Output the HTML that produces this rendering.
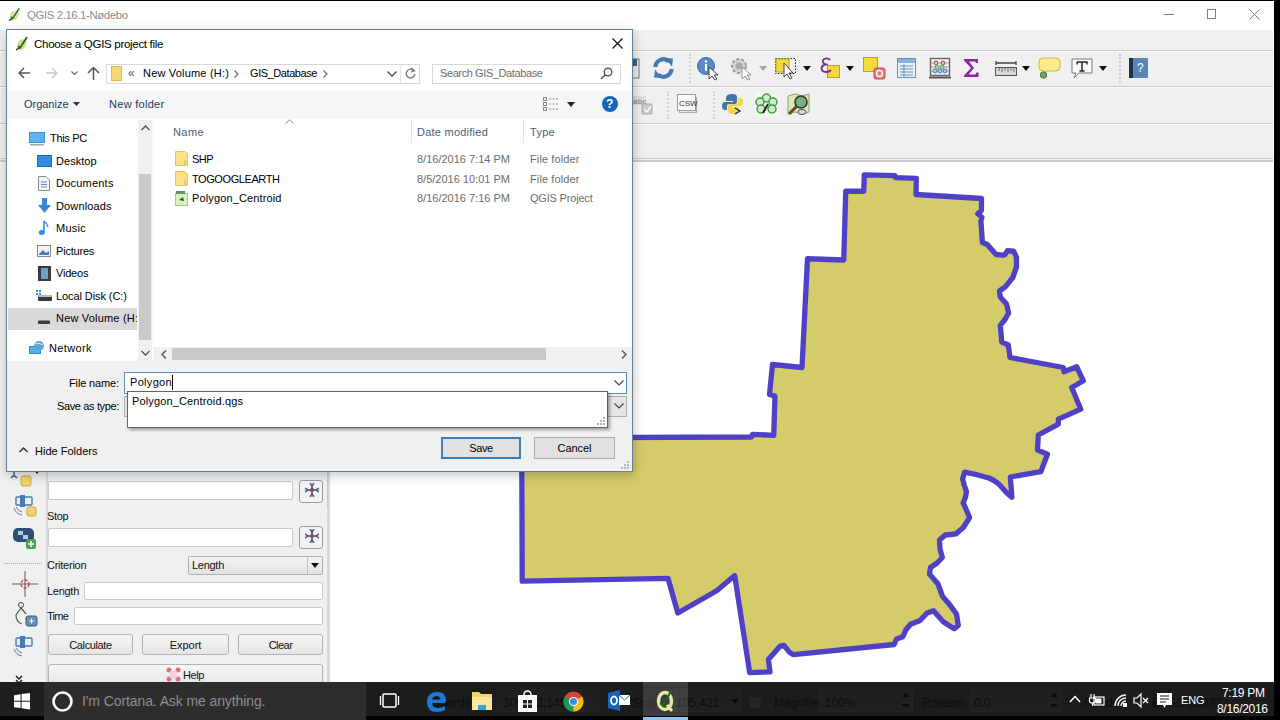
<!DOCTYPE html>
<html><head><meta charset="utf-8">
<style>
*{margin:0;padding:0;box-sizing:border-box}
html,body{width:1280px;height:720px;overflow:hidden;background:#000;font-family:"Liberation Sans",sans-serif;position:relative}
.a{position:absolute}
.t{position:absolute;white-space:nowrap;line-height:1}
svg{position:absolute;overflow:visible}
</style></head><body>
<!-- QGIS window -->
<div class="a" style="left:0;top:1px;width:1274px;height:715px;background:#f0f0f0"></div>
<div class="a" style="left:0;top:1px;width:1274px;height:29px;background:#fff"></div>
<svg style="left:8px;top:7px" width="13" height="15" viewBox="0 0 14 15"><path d="M3 6 Q1 11 4 14 Q9 14 11 9 Q12 5 10 3 Q5 3 3 6Z" fill="#d3e6a0"/><path d="M12 1 L5 12 L3 10" stroke="#2e6a2e" stroke-width="1.6" fill="none"/><path d="M1 14 L4 12" stroke="#222" stroke-width="1.2"/></svg>
<div class="t" style="left:27px;top:10px;font-size:11.4px;letter-spacing:-0.39px;color:#8c8c8c">QGIS 2.16.1-Nødebo</div>
<div class="a" style="left:0;top:50px;width:1274px;height:1px;background:#cbcbcb"></div>
<div class="a" style="left:0;top:51px;width:1274px;height:1px;background:#fafafa"></div>
<div class="a" style="left:0;top:86px;width:1274px;height:1px;background:#cbcbcb"></div>
<div class="a" style="left:0;top:87px;width:1274px;height:1px;background:#fafafa"></div>
<div class="a" style="left:0;top:123px;width:1274px;height:1px;background:#cbcbcb"></div>
<div class="a" style="left:0;top:124px;width:1274px;height:1px;background:#fafafa"></div>
<div class="a" style="left:0;top:158px;width:1274px;height:1px;background:#cbcbcb"></div>
<div class="a" style="left:0;top:160px;width:1274px;height:2px;background:#c8c8c8"></div>
<!-- title buttons -->
<div class="a" style="left:1164px;top:14px;width:10px;height:1px;background:#7c7c7c"></div>
<div class="a" style="left:1207px;top:9px;width:9px;height:10px;border:1px solid #7c7c7c"></div>
<svg style="left:1249px;top:8.5px" width="11" height="11"><path d="M0.5 0.5 L10.5 10.5 M10.5 0.5 L0.5 10.5" stroke="#7c7c7c" stroke-width="1"/></svg>
<!-- toolbar row 2 -->
<svg style="left:632px;top:58px" width="8" height="22"><rect x="-6" y="1" width="13" height="19" fill="#eee" stroke="#777"/><path d="M-2 1 H5 V8 H-2Z" fill="#3d5f8a"/></svg>
<svg style="left:653px;top:57px" width="21" height="22" viewBox="0 0 21 22"><path d="M2.5 10 A8 8 0 0 1 16 4.5" stroke="#4677b5" stroke-width="4.2" fill="none"/><path d="M12 1 L20 1.5 L19 9.5Z" fill="#4677b5"/><path d="M18.5 12 A8 8 0 0 1 5 17.5" stroke="#4677b5" stroke-width="4.2" fill="none"/><path d="M9 21 L1 20.5 L2 12.5Z" fill="#4677b5"/></svg>
<div class="a" style="left:689px;top:54px;width:2px;height:29px;border-left:2px dotted #d0d0d0"></div>
<svg style="left:697px;top:57px" width="24" height="23"><circle cx="9" cy="9" r="8.5" fill="#5a8ac6" stroke="#3b6aa8"/><path d="M9 7 V14" stroke="#fff" stroke-width="2.2"/><circle cx="9" cy="4.5" r="1.3" fill="#fff"/><path d="M12 10 L12 22 L15 19 L18 23 L20 22 L17 18 L21 18Z" fill="#fff" stroke="#333" stroke-width="0.9"/></svg>
<svg style="left:730px;top:57px" width="23" height="23"><circle cx="9" cy="9" r="7" fill="#d4d4d4" stroke="#999" stroke-width="2" stroke-dasharray="3,2"/><circle cx="9" cy="9" r="3.5" fill="#aaa"/><path d="M12 10 L12 22 L15 19 L18 23 L20 22 L17 18 L21 18Z" fill="#fff" stroke="#888" stroke-width="0.9"/></svg>
<svg style="left:759px;top:66px" width="8" height="5"><path d="M0 0 H8 L4 5Z" fill="#a8a8a8"/></svg>
<svg style="left:775px;top:58px" width="23" height="23"><rect x="0.5" y="0.5" width="20" height="15" fill="none" stroke="#222" stroke-dasharray="1.5,1.5"/><rect x="1" y="1" width="13" height="13" fill="#f3dc3a" stroke="#b9a020"/><path d="M9 5 L9 19 L12 16 L15 21 L17 20 L14 15 L18 15Z" fill="#fff" stroke="#333" stroke-width="0.9"/></svg>
<svg style="left:803px;top:66px" width="8" height="5"><path d="M0 0 H8 L4 5Z" fill="#111"/></svg>
<svg style="left:820px;top:57px" width="21" height="23"><rect x="7.5" y="8.5" width="12" height="12" fill="#f3dc3a" stroke="#b9a020"/><path d="M10 3 Q8 1 5.5 1.5 Q2 2.5 3 5.5 Q4 7 6 7.5 Q2 8 1.5 11 Q1.5 15 6 15 Q9 15 11 13" stroke="#7a2a8a" stroke-width="1.8" fill="none"/><path d="M6 7.5 H8" stroke="#7a2a8a" stroke-width="1.5"/></svg>
<svg style="left:846px;top:66px" width="8" height="5"><path d="M0 0 H8 L4 5Z" fill="#111"/></svg>
<svg style="left:863px;top:57px" width="24" height="24"><rect x="0.5" y="0.5" width="14" height="14" fill="#f3dc3a" stroke="#b9a020"/><rect x="11" y="11" width="11" height="11" rx="2" fill="#e87a7a" stroke="#c84a4a"/><circle cx="16.5" cy="16.5" r="3" stroke="#fff" stroke-width="1.3" fill="none"/></svg>
<svg style="left:897px;top:58px" width="20" height="21"><rect x="0.5" y="0.5" width="18" height="19" fill="#e8f0fa" stroke="#6a8fc0"/><rect x="1" y="1" width="17" height="4" fill="#8cb0dc"/><path d="M3 8 H16 M3 11 H16 M3 14 H16 M3 17 H16 M7 6 V19" stroke="#6a8fc0" stroke-width="1"/></svg>
<svg style="left:929px;top:57px" width="22" height="22"><rect x="1.5" y="1.5" width="19" height="17" fill="none" stroke="#666" stroke-width="1.4"/><path d="M0 20.5 H22" stroke="#555" stroke-width="2"/><path d="M2 6 H20 M2 10 H20 M2 14 H20" stroke="#888" stroke-width="0.8"/><g fill="none" stroke-width="1.2"><circle cx="7" cy="6" r="1.8" stroke="#d25a5a"/><circle cx="14" cy="6" r="1.8" stroke="#d25a5a"/><circle cx="8" cy="10" r="1.8" stroke="#6ab06a"/><circle cx="13" cy="10" r="1.8" stroke="#6ab06a"/><circle cx="6" cy="14" r="1.8" stroke="#5a8ad2"/><circle cx="11" cy="14" r="1.8" stroke="#5a8ad2"/><circle cx="16" cy="14" r="1.8" stroke="#5a8ad2"/></g></svg>
<svg style="left:963px;top:58px" width="17" height="20"><path d="M1 1 H15 V5 H13 L12 3.5 H6 L11 10 L5.5 16.5 H12.5 L13.5 14.5 H15.5 V19 H1 V17.5 L8 10 L1 2.5Z" fill="#8a2a9a"/></svg>
<svg style="left:995px;top:61px" width="22" height="15"><path d="M1 2 H21 M1 0 V4 M21 0 V4" stroke="#444" stroke-width="1.3"/><rect x="0.5" y="6.5" width="21" height="8" fill="#d8d8d8" stroke="#555"/><path d="M4 7 V10 M7 7 V11 M10 7 V10 M13 7 V11 M16 7 V10 M19 7 V11" stroke="#555" stroke-width="0.8"/></svg>
<svg style="left:1022px;top:66px" width="8" height="5"><path d="M0 0 H8 L4 5Z" fill="#111"/></svg>
<svg style="left:1038px;top:57px" width="23" height="22"><path d="M5 1 H18 Q22 1 22 5 V10 Q22 14 18 14 H9 L6 17 L7 14 H5 Q1 14 1 10 V5 Q1 1 5 1Z" fill="#fbee8a" stroke="#c9b840"/><circle cx="5.5" cy="18" r="3.2" fill="#7aa06a" stroke="#4a7a3a"/></svg>
<svg style="left:1071px;top:58px" width="22" height="22"><path d="M1 1 H21 V15 H8 L3 20 L5 15 H1Z" fill="#fafafa" stroke="#777"/><path d="M6 4 H16 V6.5 M11 4 V13 M8.5 13 H13.5 M6 4 V6.5" stroke="#222" stroke-width="1.4" fill="none"/></svg>
<svg style="left:1099px;top:66px" width="8" height="5"><path d="M0 0 H8 L4 5Z" fill="#111"/></svg>
<div class="a" style="left:1119px;top:54px;width:2px;height:29px;border-left:2px dotted #d0d0d0"></div>
<svg style="left:1129px;top:58px" width="20" height="20"><rect x="0" y="0" width="19" height="20" rx="1" fill="#5a86ba"/><rect x="0" y="0" width="4" height="20" fill="#1e2f44"/><text x="8" y="14" font-family="Liberation Sans" font-size="12" fill="#fff">?</text></svg>
<!-- toolbar row 3 -->
<svg style="left:632px;top:95px" width="22" height="20"><rect x="0" y="1" width="14" height="9" fill="#ddd"/><text x="1" y="9" font-family="Liberation Sans" font-size="8" font-weight="bold" fill="#999">abc</text><rect x="10" y="9" width="10" height="10" rx="1" fill="#c8c8c8" stroke="#aaa"/><path d="M12 14 L15 17 L19 11" stroke="#fff" stroke-width="1.4" fill="none"/></svg>
<div class="a" style="left:667px;top:91px;width:2px;height:28px;border-left:2px dotted #d0d0d0"></div>
<svg style="left:677px;top:94px" width="21" height="20"><rect x="2.5" y="3.5" width="17" height="15" fill="#e4e4e4" stroke="#aaa"/><rect x="0.5" y="0.5" width="18" height="16" fill="#fafafa" stroke="#9a9a9a"/><text x="2" y="11.5" font-family="Liberation Sans" font-size="8" fill="#333">CSW</text></svg>
<div class="a" style="left:713px;top:91px;width:2px;height:28px;border-left:2px dotted #d0d0d0"></div>
<svg style="left:722px;top:93px" width="23" height="23"><path d="M10 1 Q4 1 4 5 V8 H11 V9 H3 Q0 9 0 13 Q0 17 3 17 H5 V13 Q5 11 8 11 H13 Q15 11 15 9 V4 Q15 1 10 1Z" fill="#3f77ad"/><path d="M11 21 Q17 21 17 17 V14 H10 V13 H18 Q21 13 21 9 Q21 5 18 5 H16 V9 Q16 11 13 11 H8 Q6 11 6 13 V18 Q6 21 11 21Z" fill="#f6d54a"/><path d="M13 15 L18 18 L13 21" stroke="#222" stroke-width="1.3" fill="none"/></svg>
<svg style="left:755px;top:93px" width="23" height="23"><rect x="0" y="0" width="23" height="23" fill="#f4f8f4"/><g fill="#cfe8cf" stroke="#3aa03a" stroke-width="1.5"><circle cx="11.5" cy="5" r="4"/><circle cx="5" cy="9" r="4"/><circle cx="18" cy="9" r="4"/><circle cx="6" cy="16" r="4"/><circle cx="17" cy="16" r="4"/></g><path d="M8 20 L13 11" stroke="#222" stroke-width="2"/></svg>
<svg style="left:787px;top:93px" width="24" height="23"><path d="M1 3 L8 1 L16 3 L22 1 V19 L16 21 L8 19 L1 21Z" fill="#d8e6b8" stroke="#8aa06a"/><circle cx="14" cy="9" r="6" fill="#7ab07a" stroke="#333" stroke-width="1.6"/><path d="M9.5 13.5 L2 21" stroke="#6a4a1a" stroke-width="3"/><ellipse cx="15" cy="19" rx="4" ry="2.5" fill="#ddd" stroke="#555"/></svg>
<!-- map canvas -->
<div class="a" style="left:330px;top:162px;width:944px;height:521px;background:#fff"></div>
<div class="a" style="left:1273px;top:30px;width:1px;height:653px;background:#fff"></div>
<svg style="left:0;top:0" width="1280" height="720"><polygon points="864.3,174.8 895,175.6 895.5,177.6 916.3,178.3 916,194.5 981.5,198.5 981.4,210.5 977.8,213.8 981.9,217.2 980.9,221.1 982.4,242.5 987.2,244.5 996,254.5 1002.8,255.1 1005,254.5 1007.5,250.75 1013.75,251.25 1016.4,257 1016.5,267 1012.8,277.5 1005.8,286.4 999.5,291 1000.3,297 1006.5,304 1008.6,313 1005,319.5 1000.3,325.3 1001.2,335 1001.7,342 1008.3,345 1010,357.5 1063.3,367.5 1064,371.7 1076.7,366.7 1083.3,380.8 1071.7,387.5 1080.8,409.2 1058.3,419.2 1058.3,424.2 1038.3,435 1037.5,450 1047.5,454.2 1040.8,471.7 1010.3,477 1011.3,489 1011.8,497.4 1006.4,492.5 1002,487.5 998.6,483.8 994,480.5 988.9,478 976,474.5 964.6,472.1 962.6,478.9 964.2,485 966.5,491.6 965.5,497 963.1,503.2 964.2,505 969.6,517.5 963.3,527.5 956.1,533.8 945.3,535 939.5,540 940,549 942.3,557.5 937.1,563 930.5,567.5 929.5,574 938,584 942.6,596.6 949.8,604.8 956.5,614 958.3,625.5 954.3,628.8 943.5,621.9 933.5,610.8 927.2,612.9 920,620.5 910.6,624.2 905.9,629.7 902.8,636.7 896.6,639 894.2,644.5 793.4,654.7 789.5,652.3 784,645.3 780.2,646.1 768.4,659.4 770,671.9 749.7,672.7 734.7,575.6 716.7,590.8 677.8,613 668,578.3 522.2,581.1 521.7,437.8 751.5,437 752.5,434.3 773.75,435.3 775,396 769.5,394.5 772.5,364.5 802,367.5 807.5,258.75 843.75,260 845.75,191.25 863.75,191.25" fill="#d4cc6a" stroke="#4f40c8" stroke-width="5.3" stroke-linejoin="round"/></svg>
<!-- left panel -->
<div class="a" style="left:46px;top:160px;width:2px;height:523px;background:#d8d8d8"></div>
<div class="a" style="left:327px;top:160px;width:3px;height:523px;background:#d9d9d9"></div>
<!-- left panel content -->
<div class="a" style="left:327px;top:474px;width:1px;height:33px;border-left:1px dotted #b8b8b8"></div>
<div class="a" style="left:48px;top:481px;width:245px;height:19px;background:#fff;border:1px solid #c9c9c9;border-radius:2px"></div>
<div class="a" style="left:299px;top:480px;width:24px;height:23px;background:#f3f3f3;border:1px solid #9c9c9c;border-radius:3px"></div>
<svg style="left:304px;top:482px" width="16" height="16"><path d="M8 1.5 V14.5 M1.5 8 H14.5" stroke="#4a6080" stroke-width="1.5"/><path d="M6 1 L8 4.5 L10 1 M6 15 L8 11.5 L10 15 M1 6 L4.5 8 L1 10 M15 6 L11.5 8 L15 10" stroke="#4a6080" stroke-width="1.4" fill="none"/><circle cx="8" cy="8" r="2" fill="#9a3a4a"/></svg>
<div class="t" style="left:47px;top:510.5px;font-size:11px;color:#111;letter-spacing:-0.36px">Stop</div>
<div class="a" style="left:48px;top:528px;width:245px;height:19px;background:#fff;border:1px solid #c9c9c9;border-radius:2px"></div>
<div class="a" style="left:299px;top:526px;width:24px;height:23px;background:#f3f3f3;border:1px solid #9c9c9c;border-radius:3px"></div>
<svg style="left:304px;top:528px" width="16" height="16"><path d="M8 1.5 V14.5 M1.5 8 H14.5" stroke="#4a6080" stroke-width="1.5"/><path d="M6 1 L8 4.5 L10 1 M6 15 L8 11.5 L10 15 M1 6 L4.5 8 L1 10 M15 6 L11.5 8 L15 10" stroke="#4a6080" stroke-width="1.4" fill="none"/><circle cx="8" cy="8" r="2" fill="#9a3a4a"/></svg>
<div class="t" style="left:47px;top:560px;font-size:11px;color:#111;letter-spacing:-0.25px">Criterion</div>
<div class="a" style="left:188px;top:556px;width:135px;height:19px;background:linear-gradient(#f4f4f4,#e2e2e2);border:1px solid #b0b0b0;border-radius:2px"></div>
<div class="a" style="left:307px;top:557px;width:1px;height:17px;background:#c0c0c0"></div>
<svg style="left:311px;top:563px" width="8" height="5"><path d="M0 0 H8 L4 5Z" fill="#111"/></svg>
<div class="t" style="left:192px;top:560px;font-size:11px;color:#111;letter-spacing:-0.28px">Length</div>
<div class="t" style="left:47px;top:585.5px;font-size:11px;color:#111;letter-spacing:-0.28px">Length</div>
<div class="a" style="left:84px;top:582px;width:239px;height:18px;background:#fff;border:1px solid #c9c9c9;border-radius:2px"></div>
<div class="t" style="left:47px;top:611px;font-size:11px;color:#111;letter-spacing:-0.71px">Time</div>
<div class="a" style="left:74px;top:607px;width:249px;height:18px;background:#fff;border:1px solid #c9c9c9;border-radius:2px"></div>
<div class="a" style="left:48px;top:634px;width:85px;height:21px;background:linear-gradient(#f6f6f6,#e4e4e4);border:1px solid #b4b4b4;border-radius:3px"></div>
<div class="t" style="left:48px;top:639.5px;width:85px;text-align:center;font-size:11px;color:#111;letter-spacing:-0.37px">Calculate</div>
<div class="a" style="left:142px;top:634px;width:87px;height:21px;background:linear-gradient(#f6f6f6,#e4e4e4);border:1px solid #b4b4b4;border-radius:3px"></div>
<div class="t" style="left:142px;top:639.5px;width:87px;text-align:center;font-size:11px;color:#111;letter-spacing:-0.02px">Export</div>
<div class="a" style="left:238px;top:634px;width:85px;height:21px;background:linear-gradient(#f6f6f6,#e4e4e4);border:1px solid #b4b4b4;border-radius:3px"></div>
<div class="t" style="left:238px;top:639.5px;width:85px;text-align:center;font-size:11px;color:#111;letter-spacing:-0.52px">Clear</div>
<div class="a" style="left:48px;top:664px;width:275px;height:25px;background:linear-gradient(#f6f6f6,#e4e4e4);border:1px solid #b4b4b4;border-radius:3px"></div>
<svg style="left:166px;top:667px" width="15" height="15"><g fill="#e07070"><circle cx="3" cy="3" r="2.5"/><circle cx="12" cy="3" r="2.5"/><circle cx="3" cy="12" r="2.5"/><circle cx="12" cy="12" r="2.5"/></g><rect x="4" y="4" width="7" height="7" fill="#f4d0d0"/></svg>
<div class="t" style="left:183px;top:670px;font-size:11px;color:#111;letter-spacing:-0.41px">Help</div>
<!-- left vertical toolbar icons -->
<svg style="left:9px;top:470px" width="30" height="18"><path d="M5 0 V6 M2 8 Q5 4 8 8" stroke="#3a5a8a" stroke-width="1.4" fill="none"/><rect x="12" y="6" width="10" height="10" rx="2" fill="#f0d36a" stroke="#c8a83a"/><path d="M25 0 H31 L28 4Z" fill="#111"/></svg>
<svg style="left:12px;top:494px" width="26" height="24"><rect x="4" y="3" width="16" height="8" rx="1" fill="#e8f0f8" stroke="#4a78b0" stroke-width="1.4"/><rect x="8" y="1" width="5" height="12" fill="#4a78b0"/><path d="M2 14 Q4 20 10 21 M4 13 Q6 17 10 18" stroke="#5a7aaa" stroke-width="1" fill="none"/><rect x="15" y="13" width="9" height="9" rx="2" fill="#f0d36a" stroke="#c8a83a"/></svg>
<svg style="left:12px;top:526px" width="26" height="24"><rect x="1" y="2" width="21" height="14" rx="5" fill="#2c4f78"/><rect x="6" y="5" width="5" height="4" fill="#b8cbe0"/><rect x="11" y="9" width="5" height="4" fill="#b8cbe0"/><rect x="14" y="13" width="10" height="10" rx="2" fill="#4aa05a"/><path d="M19 15 V21 M16 18 H22" stroke="#fff" stroke-width="1.6"/></svg>
<div class="a" style="left:4px;top:563px;width:38px;height:1px;border-top:1px dotted #aaa"></div>
<svg style="left:12px;top:571px" width="26" height="26"><path d="M13 0 V26 M0 13 H26" stroke="#6a5a5a" stroke-width="1"/><circle cx="13" cy="13" r="4" stroke="#c04a4a" stroke-width="1.4" fill="none" stroke-dasharray="3,1.5"/></svg>
<svg style="left:14px;top:602px" width="24" height="25"><circle cx="7" cy="3" r="2.5" stroke="#444" fill="none"/><path d="M7 6 L2 13 Q2 20 8 22 M7 6 L12 12" stroke="#555" stroke-width="1.2" fill="none"/><rect x="12" y="14" width="11" height="10" rx="2" fill="#6e8fb4" stroke="#3a5a80"/><path d="M15 19 H20 M17.5 16.5 V21.5" stroke="#fff" stroke-width="1"/></svg>
<svg style="left:12px;top:635px" width="24" height="22"><rect x="4" y="3" width="16" height="8" rx="1" fill="#e8f0f8" stroke="#4a78b0" stroke-width="1.4"/><rect x="8" y="1" width="5" height="12" fill="#4a78b0"/><path d="M2 14 Q4 20 10 21 M4 13 Q6 17 10 18" stroke="#5a7aaa" stroke-width="1" fill="none"/></svg>
<svg style="left:15px;top:675px" width="8" height="9"><path d="M1 1 L4 4 L7 1 M1 5 L4 8 L7 5" stroke="#111" stroke-width="1.3" fill="none"/></svg>
<!-- dialog -->
<div class="a" style="left:6px;top:29px;width:627px;height:443px;background:#f0f0f0;border:1px solid #687f96;box-shadow:1px 3px 10px rgba(0,0,0,.24)"></div>
<div class="a" style="left:7px;top:30px;width:625px;height:61px;background:#fff"></div>
<svg style="left:15px;top:36px" width="14" height="15" viewBox="0 0 14 15"><path d="M3 6 Q1 11 4 14 Q9 14 11 9 Q12 5 10 3 Q5 3 3 6Z" fill="#c8e08a"/><path d="M12 1 L5 12 L3 10" stroke="#1f5f1f" stroke-width="1.6" fill="none"/><path d="M1 14 L4 12" stroke="#222" stroke-width="1.2"/></svg>
<div class="t d" style="left:34px;top:38px;font-size:11.6px;letter-spacing:-0.34px;color:#000">Choose a QGIS project file</div>
<svg style="left:612px;top:38px" width="11" height="11"><path d="M0.5 0.5 L10.5 10.5 M10.5 0.5 L0.5 10.5" stroke="#111" stroke-width="1.2"/></svg>
<!-- nav -->
<svg style="left:18px;top:67px" width="13" height="12"><path d="M1 6 H12 M6 1 L1 6 L6 11" stroke="#555" stroke-width="1.4" fill="none"/></svg>
<svg style="left:46px;top:67px" width="13" height="12"><path d="M0 6 H11 M6 1 L11 6 L6 11" stroke="#c8c8c8" stroke-width="1.4" fill="none"/></svg>
<svg style="left:71px;top:71px" width="7" height="5"><path d="M0.5 0.5 L3.5 3.5 L6.5 0.5" stroke="#666" stroke-width="1.2" fill="none"/></svg>
<svg style="left:87px;top:66px" width="13" height="14"><path d="M6.5 14 V1.5 M1 7 L6.5 1.5 L12 7" stroke="#555" stroke-width="1.5" fill="none"/></svg>
<div class="a" style="left:106px;top:64px;width:314px;height:20px;border:1px solid #d9d9d9;background:#fff"></div>
<div class="a" style="left:400px;top:64px;width:1px;height:20px;background:#e3e3e3"></div>
<div class="a" style="left:111px;top:66px;width:11px;height:15px;background:#f7d874;border:1px solid #e0b93e"></div>
<div class="t d" style="left:128px;top:67px;font-size:12px;color:#555">&laquo;</div>
<div class="t d" style="left:143px;top:67.5px;font-size:11px;color:#000;letter-spacing:0.19px">New Volume (H:)</div>
<svg style="left:234px;top:70px" width="5" height="8"><path d="M0.5 0.5 L4 4 L0.5 7.5" stroke="#666" stroke-width="1.1" fill="none"/></svg>
<div class="t d" style="left:250px;top:67.5px;font-size:11px;color:#000;letter-spacing:-0.43px">GIS_Database</div>
<svg style="left:323px;top:70px" width="5" height="8"><path d="M0.5 0.5 L4 4 L0.5 7.5" stroke="#666" stroke-width="1.1" fill="none"/></svg>
<svg style="left:387px;top:71px" width="10" height="6"><path d="M0.5 0.5 L5 5 L9.5 0.5" stroke="#444" stroke-width="1.3" fill="none"/></svg>
<svg style="left:404px;top:67px" width="13" height="13"><path d="M9.5 3.5 A4.3 4.3 0 1 0 10.8 7" stroke="#777" stroke-width="1.4" fill="none"/><path d="M7 1 L10.5 3.8 L7 5" stroke="#777" stroke-width="1.3" fill="none"/></svg>
<div class="a" style="left:432px;top:64px;width:189px;height:20px;border:1px solid #d9d9d9;background:#fff"></div>
<div class="t d" style="left:440px;top:67.5px;font-size:11px;color:#6d6d6d;letter-spacing:-0.40px">Search GIS_Database</div>
<svg style="left:600px;top:67px" width="13" height="13"><circle cx="8" cy="5" r="3.8" stroke="#555" stroke-width="1.4" fill="none"/><path d="M5.3 7.7 L1 12" stroke="#555" stroke-width="1.6"/></svg>
<!-- command bar -->
<div class="a" style="left:7px;top:91px;width:625px;height:28px;background:#f4f6f8"></div>
<div class="t d" style="left:24px;top:99px;font-size:11px;color:#1e3a5a;letter-spacing:-0.02px">Organize</div>
<svg style="left:73px;top:102px" width="7" height="4"><path d="M0 0 H7 L3.5 4Z" fill="#333"/></svg>
<div class="t d" style="left:109px;top:99px;font-size:11px;color:#1e3a5a;letter-spacing:0.29px">New folder</div>
<svg style="left:543px;top:97px" width="17" height="14"><g fill="none" stroke="#8a8a8a" stroke-width="1"><rect x="0.5" y="0.5" width="3" height="3"/><rect x="0.5" y="5.5" width="3" height="3"/><rect x="0.5" y="10.5" width="3" height="3"/></g><g stroke="#8a8a8a" stroke-width="1.2" stroke-dasharray="2,1.5"><path d="M6 2 H16 M6 7 H16 M6 12 H16"/></g></svg>
<svg style="left:567px;top:102px" width="8" height="5"><path d="M0 0 H8 L4 5Z" fill="#222"/></svg>
<div class="a" style="left:602px;top:96px;width:16px;height:16px;border-radius:50%;background:#1565b8"></div>
<div class="t" style="left:606px;top:98px;font-size:12px;font-weight:bold;color:#fff">?</div>
<!-- content white -->
<div class="a" style="left:7px;top:119px;width:625px;height:242px;background:#fff"></div>
<!-- nav scrollbar -->
<div class="a" style="left:138px;top:120px;width:14px;height:241px;background:#f0f0f0"></div>
<div class="a" style="left:139px;top:174px;width:12px;height:166px;background:#c9c9c9"></div>
<svg style="left:141px;top:125px" width="9" height="6"><path d="M0.5 5 L4.5 1 L8.5 5" stroke="#555" stroke-width="1.4" fill="none"/></svg>
<svg style="left:141px;top:350px" width="9" height="6"><path d="M0.5 1 L4.5 5 L8.5 1" stroke="#555" stroke-width="1.4" fill="none"/></svg>
<!-- selected row -->
<div class="a" style="left:8px;top:308px;width:129px;height:22px;background:#d9d9d9"></div>
<!-- nav pane items -->
<svg style="left:29px;top:132px" width="16" height="14"><rect x="0.5" y="0.5" width="15" height="10" fill="#5eb5ee" stroke="#3a8fd0"/><rect x="1" y="12" width="14" height="1.5" fill="#9aa"/></svg>
<div class="t d" style="left:50px;top:133px;font-size:11px;letter-spacing:-0.33px">This PC</div>
<svg style="left:37px;top:155px" width="15" height="12"><rect x="0.5" y="0.5" width="14" height="11" fill="#2f8ee0" stroke="#1d6fb8"/></svg>
<div class="t d" style="left:56px;top:155.5px;font-size:11px;letter-spacing:0.04px">Desktop</div>
<svg style="left:38px;top:176px" width="12" height="15"><path d="M0.5 0.5 H8 L11.5 4 V14.5 H0.5Z" fill="#f4f4f4" stroke="#8a8a8a"/><path d="M3 6 H9 M3 8.5 H9 M3 11 H9" stroke="#5a8ac0" stroke-width="1"/></svg>
<div class="t d" style="left:56px;top:178px;font-size:11px;letter-spacing:0.22px">Documents</div>
<svg style="left:37px;top:198px" width="15" height="16"><path d="M5 0 H10 V7 H14 L7.5 15 L1 7 H5Z" fill="#3a87d6"/></svg>
<div class="t d" style="left:56px;top:200.5px;font-size:11px;letter-spacing:0.13px">Downloads</div>
<svg style="left:38px;top:220px" width="12" height="16"><path d="M6 1 V12" stroke="#2f8ee0" stroke-width="1.6"/><ellipse cx="3.8" cy="12.5" rx="3" ry="2.5" fill="#2f8ee0"/><path d="M6 1 Q9 3 10 7" stroke="#2f8ee0" stroke-width="1.4" fill="none"/></svg>
<div class="t d" style="left:56px;top:223px;font-size:11px;letter-spacing:0.25px">Music</div>
<svg style="left:37px;top:245px" width="14" height="12"><rect x="0.5" y="0.5" width="13" height="11" fill="#eef3f8" stroke="#7f8a96"/><path d="M2 9 L6 5 L9 8 L12 6 V10 H2Z" fill="#4a7bb0"/></svg>
<div class="t d" style="left:56px;top:245.5px;font-size:11px;letter-spacing:-0.2px">Pictures</div>
<svg style="left:38px;top:266px" width="13" height="15"><rect x="0" y="0" width="13" height="15" fill="#3b3b3b"/><rect x="3" y="2" width="7" height="11" fill="#6aa3c8"/></svg>
<div class="t d" style="left:56px;top:268px;font-size:11px;letter-spacing:-0.2px">Videos</div>
<svg style="left:36px;top:290px" width="16" height="12"><rect x="0" y="0" width="2" height="2" fill="#2aa0d8"/><rect x="3" y="0" width="2" height="2" fill="#2aa0d8"/><rect x="0" y="3" width="2" height="2" fill="#2aa0d8"/><rect x="3" y="3" width="2" height="2" fill="#2aa0d8"/><rect x="2" y="6" width="14" height="5" rx="1" fill="#3a3a3a"/><rect x="2" y="5" width="14" height="2" fill="#bbb"/></svg>
<div class="t d" style="left:56px;top:290.5px;font-size:11px;letter-spacing:-0.09px">Local Disk (C:)</div>
<svg style="left:38px;top:320px" width="13" height="5"><rect x="0" y="0.5" width="12" height="3.5" rx="1" fill="#3a3a3a"/></svg>
<div class="t d" style="left:56px;top:313px;font-size:11px;letter-spacing:0.19px;width:81px;overflow:hidden">New Volume (H:)</div>
<svg style="left:29px;top:341px" width="16" height="15"><rect x="0.5" y="5.5" width="11" height="7" fill="#59b0ea" stroke="#2e86cc"/><circle cx="10" cy="5" r="5" fill="#5aa7de"/><path d="M6 3 Q10 1 14 4" stroke="#fff" stroke-width="0.8" fill="none"/></svg>
<div class="t d" style="left:49px;top:343px;font-size:11px;letter-spacing:0.35px">Network</div>
<!-- file list -->
<div class="a" style="left:153px;top:120px;width:1px;height:241px;background:#f3f3f3"></div>
<div class="t d" style="left:173px;top:126.5px;font-size:11px;color:#4c607a;letter-spacing:0.41px">Name</div>
<svg style="left:285px;top:119px" width="9" height="5"><path d="M0.5 4.5 L4.5 0.8 L8.5 4.5" stroke="#888" stroke-width="1" fill="none"/></svg>
<div class="a" style="left:411px;top:120px;width:1px;height:23px;background:#e5e5e5"></div>
<div class="a" style="left:523px;top:120px;width:1px;height:23px;background:#e5e5e5"></div>
<div class="t d" style="left:417px;top:126.5px;font-size:11px;color:#4c607a;letter-spacing:0.24px">Date modified</div>
<div class="t d" style="left:530px;top:126.5px;font-size:11px;color:#4c607a;letter-spacing:0.29px">Type</div>
<svg style="left:175px;top:151px" width="13" height="15"><path d="M0.5 0.5 H10 L12.5 3 V14.5 H0.5Z" fill="#fbe08c" stroke="#e6c561"/><path d="M10 9 V14.5" stroke="#d9b24a"/></svg>
<div class="t d" style="left:192px;top:153.5px;font-size:11px;letter-spacing:-0.54px">SHP</div>
<div class="t d" style="left:417px;top:153.5px;font-size:11px;color:#6d6d6d;letter-spacing:0.00px">8/16/2016 7:14 PM</div>
<div class="t d" style="left:530px;top:153.5px;font-size:11px;color:#6d6d6d;letter-spacing:0.11px">File folder</div>
<svg style="left:175px;top:171px" width="13" height="15"><path d="M0.5 0.5 H10 L12.5 3 V14.5 H0.5Z" fill="#fbe08c" stroke="#e6c561"/><path d="M10 9 V14.5" stroke="#d9b24a"/></svg>
<div class="t d" style="left:192px;top:173.5px;font-size:11px;letter-spacing:-0.42px">TOGOOGLEARTH</div>
<div class="t d" style="left:417px;top:173.5px;font-size:11px;color:#6d6d6d;letter-spacing:0.00px">8/5/2016 10:01 PM</div>
<div class="t d" style="left:530px;top:173.5px;font-size:11px;color:#6d6d6d;letter-spacing:0.11px">File folder</div>
<svg style="left:175px;top:191px" width="13" height="15"><rect x="0.5" y="2.5" width="12" height="12" fill="#dcefc0" stroke="#a8c88a"/><rect x="1" y="0" width="9" height="3" fill="#6a8a6a"/><path d="M4 9 L8 6 L9 10Z" fill="#1a6a1a"/></svg>
<div class="t d" style="left:192px;top:193px;font-size:11px;letter-spacing:0.13px">Polygon_Centroid</div>
<div class="t d" style="left:417px;top:193px;font-size:11px;color:#6d6d6d;letter-spacing:0.00px">8/16/2016 7:16 PM</div>
<div class="t d" style="left:530px;top:193px;font-size:11px;color:#6d6d6d;letter-spacing:-0.19px">QGIS Project</div>
<!-- h scrollbar -->
<div class="a" style="left:154px;top:347px;width:478px;height:14px;background:#f0f0f0"></div>
<div class="a" style="left:172px;top:348px;width:374px;height:12px;background:#c9c9c9"></div>
<svg style="left:161px;top:350px" width="6" height="9"><path d="M5 0.5 L1 4.5 L5 8.5" stroke="#555" stroke-width="1.4" fill="none"/></svg>
<svg style="left:621px;top:350px" width="6" height="9"><path d="M1 0.5 L5 4.5 L1 8.5" stroke="#555" stroke-width="1.4" fill="none"/></svg>
<!-- bottom -->
<div class="t d" style="left:69px;top:378px;font-size:11px;letter-spacing:-0.14px">File name:</div>
<div class="a" style="left:124px;top:372px;width:503px;height:22px;background:#fff;border:1px solid #5b8fbe"></div>
<div class="t d" style="left:130px;top:377px;font-size:11px;letter-spacing:0.32px">Polygon</div>
<div class="a" style="left:172px;top:375px;width:1px;height:15px;background:#000"></div>
<svg style="left:614px;top:380px" width="10" height="6"><path d="M0.5 0.5 L5 5 L9.5 0.5" stroke="#444" stroke-width="1.2" fill="none"/></svg>
<div class="t d" style="left:57px;top:401px;font-size:11px;letter-spacing:-0.36px">Save as type:</div>
<div class="a" style="left:124px;top:396px;width:503px;height:21px;background:#e5e5e5;border:1px solid #adadad"></div>
<svg style="left:614px;top:403px" width="10" height="6"><path d="M0.5 0.5 L5 5 L9.5 0.5" stroke="#444" stroke-width="1.2" fill="none"/></svg>
<div class="a" style="left:127px;top:391px;width:481px;height:37px;background:#fff;border:1px solid #646464;box-shadow:2px 2px 3px rgba(0,0,0,.35)"></div>
<div class="t d" style="left:132px;top:396px;font-size:11px;letter-spacing:0.14px">Polygon_Centroid.qgs</div>
<svg style="left:597px;top:417px" width="9" height="9"><g fill="#b0b0b0"><rect x="6" y="0" width="2" height="2"/><rect x="3" y="3" width="2" height="2"/><rect x="6" y="3" width="2" height="2"/><rect x="0" y="6" width="2" height="2"/><rect x="3" y="6" width="2" height="2"/><rect x="6" y="6" width="2" height="2"/></g></svg>
<svg style="left:19px;top:447px" width="9" height="6"><path d="M0.5 5 L4.5 1 L8.5 5" stroke="#333" stroke-width="1.5" fill="none"/></svg>
<div class="t d" style="left:35px;top:445.5px;font-size:11px;letter-spacing:0.01px">Hide Folders</div>
<div class="a" style="left:441px;top:437px;width:80px;height:22px;background:#e1e1e1;border:2px solid #3b80b8"></div>
<div class="t d" style="left:441px;top:442.5px;width:80px;text-align:center;font-size:11px;letter-spacing:-0.42px">Save</div>
<div class="a" style="left:534px;top:437px;width:81px;height:22px;background:#e1e1e1;border:1px solid #adadad"></div>
<div class="t d" style="left:534px;top:442.5px;width:81px;text-align:center;font-size:11px;letter-spacing:-0.04px">Cancel</div>
<svg style="left:621px;top:461px" width="9" height="9"><g fill="#b5b5b5"><rect x="6" y="0" width="2" height="2"/><rect x="3" y="3" width="2" height="2"/><rect x="6" y="3" width="2" height="2"/><rect x="0" y="6" width="2" height="2"/><rect x="3" y="6" width="2" height="2"/><rect x="6" y="6" width="2" height="2"/></g></svg>
<!-- taskbar -->
<div class="a" style="left:0;top:682px;width:1274px;height:34px;background:#1c1c1c"></div>
<!-- faint status bar under taskbar -->
<div class="a" style="left:0;top:683px;width:1274px;height:1px;background:#222"></div>
<div class="t" style="left:432px;top:697px;font-size:12px;color:#0d0d0d">Coordinate</div>
<div class="a" style="left:497px;top:689px;width:102px;height:23px;background:#202020;border:1px solid #242424"></div>
<div class="t" style="left:503px;top:697px;font-size:12px;color:#0d0d0d">306512,1455</div>
<div class="t" style="left:632px;top:697px;font-size:12px;color:#0d0d0d">Scale</div>
<div class="a" style="left:674px;top:689px;width:67px;height:23px;background:#202020;border:1px solid #242424"></div>
<div class="t" style="left:676px;top:697px;font-size:12px;color:#0d0d0d">105,421</div>
<svg style="left:731px;top:699px" width="8" height="5"><path d="M0 0 H8 L4 5Z" fill="#0a0a0a"/></svg>
<div class="a" style="left:750px;top:697px;width:11px;height:11px;background:#262626;border-radius:2px"></div>
<div class="t" style="left:774px;top:697px;font-size:12px;color:#0d0d0d;letter-spacing:-0.2px">Magnifier</div>
<div class="a" style="left:819px;top:689px;width:94px;height:23px;background:#202020;border:1px solid #242424"></div>
<div class="t" style="left:825px;top:697px;font-size:12px;color:#0d0d0d">100%</div>
<svg style="left:902px;top:692px" width="8" height="17"><path d="M0 5 L4 1 L8 5Z M0 12 L4 16 L8 12Z" fill="#0a0a0a"/></svg>
<div class="t" style="left:922px;top:697px;font-size:12px;color:#0d0d0d;letter-spacing:-0.2px">Rotation</div>
<div class="a" style="left:970px;top:689px;width:92px;height:23px;background:#202020;border:1px solid #242424"></div>
<div class="t" style="left:974px;top:697px;font-size:12px;color:#0d0d0d">0.0</div>
<svg style="left:1050px;top:692px" width="8" height="17"><path d="M0 5 L4 1 L8 5Z M0 12 L4 16 L8 12Z" fill="#0a0a0a"/></svg>
<div class="t" style="left:1084px;top:697px;font-size:12px;color:#0d0d0d">Render</div>
<div class="t" style="left:1152px;top:697px;font-size:12px;color:#0d0d0d">EPSG:25832</div>
<div class="a" style="left:0;top:682px;width:44px;height:34px;background:#1f1f1f"></div>
<div class="a" style="left:44px;top:682px;width:322px;height:38px;background:#2d2d2d"></div>
<svg style="left:14px;top:693px" width="16" height="17"><path d="M0 2.2 L6.6 1.3 V7.7 H0Z M7.6 1.1 L16 0 V7.7 H7.6Z M0 8.7 H6.6 V15.1 L0 14.2Z M7.6 8.7 H16 V16.4 L7.6 15.3Z" fill="#fff"/></svg>
<svg style="left:52px;top:691px" width="21" height="21"><circle cx="10.5" cy="10.5" r="9" stroke="#fff" stroke-width="2.6" fill="none"/></svg>
<div class="t" style="left:82px;top:694px;font-size:14px;color:#8e8e8e;letter-spacing:-0.10px">I'm Cortana. Ask me anything.</div>
<svg style="left:379px;top:693px" width="21" height="15"><rect x="4" y="1" width="13" height="13" rx="1" stroke="#fff" stroke-width="1.5" fill="none"/><path d="M1.5 3 V12 M19.5 3 V12" stroke="#fff" stroke-width="1.3"/></svg>
<svg style="left:426px;top:691px" width="21" height="21"><path d="M19 12 H6 Q6.5 17 12 17 Q16 17 19 15 V19 Q16 21 11 21 Q1 21 1 11 Q1 1 11 1 Q20 1 20 10 Z M6 8.5 H14.5 Q14 5 10.5 5 Q7 5 6 8.5Z" fill="#1e7ad8"/></svg>
<svg style="left:471px;top:691px" width="22" height="20"><path d="M1 1 H8 L10 3 H21 V19 H1Z" fill="#f3d46a"/><rect x="1" y="6" width="20" height="13" fill="#fae59a"/><path d="M7 14 H15 V19 H7Z" fill="#2aa8d8"/></svg>
<svg style="left:517px;top:690px" width="21" height="23"><path d="M7 5 Q7 1 10.5 1 Q14 1 14 5" stroke="#fff" stroke-width="1.5" fill="none"/><path d="M1 5 H20 V22 H1Z" fill="#fff"/><path d="M6 10 H10 V13.5 H6Z M11 10 H15 V13.5 H11Z M6 14.5 H10 V18 H6Z M11 14.5 H15 V18 H11Z" fill="#222"/></svg>
<svg style="left:563px;top:691px" width="21" height="21"><circle cx="10.5" cy="10.5" r="10" fill="#db4437"/><path d="M10.5 10.5 L1.9 5.5 A10 10 0 0 0 10.5 20.5Z" fill="#0f9d58"/><path d="M10.5 10.5 L10.5 20.5 A10 10 0 0 0 19.1 5.5Z" fill="#f4c20d"/><circle cx="10.5" cy="10.5" r="4.6" fill="#fff"/><circle cx="10.5" cy="10.5" r="3.6" fill="#4285f4"/></svg>
<svg style="left:608px;top:690px" width="23" height="21"><path d="M0 3 L12 0 V21 L0 18Z" fill="#1565c0"/><rect x="11" y="5" width="11" height="10" fill="#fff"/><path d="M11 5 L16.5 10 L22 5" stroke="#1565c0" stroke-width="1" fill="none"/><ellipse cx="6" cy="10.5" rx="3" ry="4" stroke="#fff" stroke-width="1.8" fill="none"/></svg>
<div class="a" style="left:643px;top:682px;width:45px;height:34px;background:rgba(255,255,255,.14)"></div>
<div class="a" style="left:643px;top:717px;width:45px;height:3px;background:#8cc4f2"></div>
<svg style="left:657px;top:690px" width="17" height="22"><ellipse cx="8" cy="11" rx="6.5" ry="8.5" stroke="#e8e8a0" stroke-width="3.5" fill="none"/><path d="M10 15 L15 21" stroke="#e8e8a0" stroke-width="3"/><path d="M14 1 L6 16 L3 13" stroke="#1a6a1a" stroke-width="2" fill="none"/></svg>
<svg style="left:1069px;top:695px" width="12" height="8"><path d="M1 7 L6 1.5 L11 7" stroke="#fff" stroke-width="1.5" fill="none"/></svg>
<svg style="left:1088px;top:694px" width="17" height="13"><path d="M3 0 V4 M6 0 V4 M1.5 4 H7.5 V7 Q7.5 9 4.5 9 Q1.5 9 1.5 7Z M4.5 9 V12" stroke="#fff" stroke-width="1.2" fill="none"/><rect x="6" y="3" width="10" height="8" stroke="#fff" stroke-width="1.2" fill="none"/><rect x="7.5" y="4.5" width="6" height="5" fill="#fff"/></svg>
<svg style="left:1114px;top:694px" width="13" height="13"><path d="M1 12 A11 11 0 0 1 12 1 M4 12 A8 8 0 0 1 12 4 M7 12 A5 5 0 0 1 12 7" stroke="#fff" stroke-width="1.4" fill="none"/><rect x="9" y="9" width="4" height="4" fill="#fff"/></svg>
<svg style="left:1133px;top:693px" width="16" height="15"><path d="M1 5 H4 L8 1 V14 L4 10 H1Z" stroke="#fff" stroke-width="1.2" fill="none"/><path d="M10 5 L15 10 M15 5 L10 10" stroke="#fff" stroke-width="1.3"/></svg>
<svg style="left:1157px;top:693px" width="15" height="16"><path d="M0 0 H15 V12 H9 L7.5 15 L6 12 H0Z" fill="#fff"/><path d="M3 3 H12 M3 6 H12 M3 9 H9" stroke="#1c1c1c" stroke-width="1.2"/></svg>
<div class="t" style="left:1181px;top:695px;font-size:11px;color:#fff;letter-spacing:-0.2px">ENG</div>
<div class="t" style="left:1222px;top:687px;font-size:12px;color:#fff;letter-spacing:-0.3px">7:19 PM</div>
<div class="t" style="left:1217px;top:703px;font-size:12px;color:#fff;letter-spacing:-0.3px">8/16/2016</div>
</body></html>
